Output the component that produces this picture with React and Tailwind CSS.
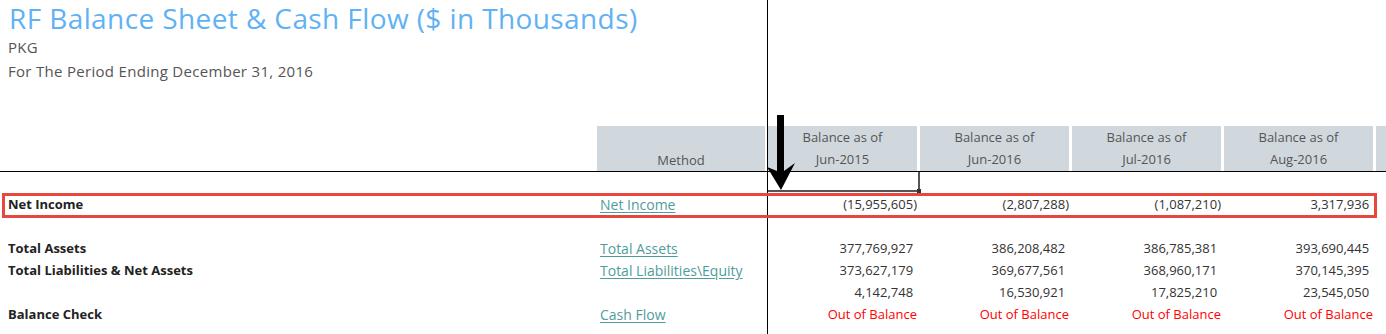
import React from "react";

const cols = ["Jun-2015", "Jun-2016", "Jul-2016", "Aug-2016"];

const rows = [
  { label: "Net Income", link: "Net Income", vals: ["(15,955,605)", "(2,807,288)", "(1,087,210)", "3,317,936"] },
  { blank: true },
  { label: "Total Assets", link: "Total Assets", vals: ["377,769,927", "386,208,482", "386,785,381", "393,690,445"] },
  { label: "Total Liabilities & Net Assets", link: "Total Liabilities\\Equity", vals: ["373,627,179", "369,677,561", "368,960,171", "370,145,395"] },
  { label: "", link: "", vals: ["4,142,748", "16,530,921", "17,825,210", "23,545,050"] },
  { label: "Balance Check", link: "Cash Flow", vals: ["Out of Balance", "Out of Balance", "Out of Balance", "Out of Balance"], red: true },
];

function Val({ v, red }) {
  if (red) return <span className="text-[#ff0000]">{v}</span>;
  const neg = v.startsWith("(");
  return (
    <span>
      {v}
      {!neg && <span className="invisible">)</span>}
    </span>
  );
}

export default function App() {
  return (
    <div className="relative w-[1386px] h-[334px] overflow-hidden bg-white font-['Open_Sans',sans-serif] text-[#444]">
      {/* Title block */}
      <div className="flex h-[126px]">
        <div className="w-[768px] shrink-0 border-r border-black pl-[8px]">
          <div className="text-[28px] leading-[36px] tracking-[0.4px] text-[#60b2f4] ml-[1px]">
            RF Balance Sheet &amp; Cash Flow ($ in Thousands)
          </div>
          <div className="text-[15px] leading-[22px] tracking-[0.3px] text-[#555]">PKG</div>
          <div className="text-[15px] leading-[26px] tracking-[0.3px] text-[#555]">For The Period Ending December 31, 2016</div>
        </div>
        <div className="flex-1" />
      </div>

      {/* Header row */}
      <div className="flex h-[46px] border-b border-black">
        <div className="w-[768px] shrink-0 border-r border-black pl-[597px] pr-[2px]">
          <div className="h-full bg-[#d0d8de] flex flex-col justify-end text-center text-[13px] leading-[22px] text-[#555]">
            Method
          </div>
        </div>
        <div className="flex flex-1">
          {[...cols, ""].map((c, i) => (
            <div
              key={i}
              className="w-[152px] shrink-0 h-full bg-[#d0d8de] border-r-[3px] border-white flex flex-col text-center text-[13px] leading-[22px] text-[#555]"
            >
              {c && (
                <>
                  <div>Balance as of</div>
                  <div>{c}</div>
                </>
              )}
            </div>
          ))}
        </div>
      </div>

      {/* Selected cell row */}
      <div className="flex h-[22px]">
        <div className="w-[768px] shrink-0 border-r border-black" />
        <div className="flex-1 flex">
          <div className="w-[152px] h-[20px] border-r-2 border-b-2 border-[#555]" />
        </div>
      </div>

      {/* Data rows */}
      {rows.map((r, i) => (
        <div key={i} className="flex h-[22px] items-center">
          <div className="w-[768px] shrink-0 h-full border-r border-black flex items-center">
            <div className="w-[600px] shrink-0 pl-[8px] text-[13px] font-bold text-[#222]">{r.label}</div>
            {r.link ? (
              <a className="mb-[2px] text-[14px] text-[#4f9d9b] underline underline-offset-[2px] decoration-[#4f9d9b]">{r.link}</a>
            ) : null}
          </div>
          <div className="flex-1 flex h-full items-center">
            {!r.blank &&
              r.vals.map((v, j) => (
                <div key={j} className="w-[152px] shrink-0 text-right pr-[3px] text-[13px] text-[#333]">
                  <Val v={v} red={r.red} />
                </div>
              ))}
          </div>
        </div>
      ))}
      <div className="flex h-[10px]">
        <div className="w-[768px] shrink-0 h-full border-r border-black" />
      </div>

      {/* Fill handle */}
      <div className="absolute left-[917px] top-[189px] w-[4px] h-[4px] bg-[#333]" />

      {/* Red highlight box */}
      <div className="absolute left-[2px] top-[193px] w-[1375px] h-[25px] border-[3px] border-[#e8473e]" />

      {/* Arrow */}
      <svg className="absolute left-[766px] top-[114px]" width="32" height="80" viewBox="0 0 32 80">
        <rect x="11" y="1" width="7" height="58" fill="#000" />
        <polygon points="11,57 1,53 15,76 29,49 18,57" fill="#000" />
      </svg>
    </div>
  );
}
